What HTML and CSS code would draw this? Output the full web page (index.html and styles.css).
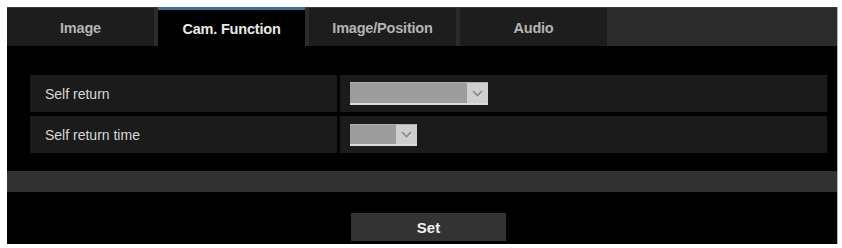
FILE: index.html
```html
<!DOCTYPE html>
<html lang="en">
  <head>
    <meta charset="UTF-8" />
    <meta name="viewport" content="width=device-width, initial-scale=1.0" />
    <title>Cam. Function</title>
    <link rel="stylesheet" href="styles.css">
  </head>
  <body>
    <div class="frame">
      <div class="tabs">
        <div class="tab">Image</div>
        <div class="tab active">Cam. Function</div>
        <div class="tab">Image/Position</div>
        <div class="tab">Audio</div>
      </div>

      <div class="settings">
        <div class="row">
          <div class="label">Self return</div>
          <div class="value">
            <div class="select select-wide">
              <div class="select-box"></div>
              <div class="select-btn">
                <svg width="11" height="7" viewBox="0 0 11 7">
                  <path d="M1 1 L5.5 5.5 L10 1" fill="none" stroke="#8a8a8a" stroke-width="1.6" />
                </svg>
              </div>
            </div>
          </div>
        </div>
        <div class="row">
          <div class="label">Self return time</div>
          <div class="value">
            <div class="select select-short">
              <div class="select-box"></div>
              <div class="select-btn">
                <svg width="11" height="7" viewBox="0 0 11 7">
                  <path d="M1 1 L5.5 5.5 L10 1" fill="none" stroke="#8a8a8a" stroke-width="1.6" />
                </svg>
              </div>
            </div>
          </div>
        </div>
      </div>

      <div class="divider"></div>

      <div class="actions">
        <div class="btn-set">Set</div>
      </div>
    </div>
  </body>
</html>
```

FILE: styles.css
```css
* {
  margin: 0;
  padding: 0;
  box-sizing: border-box;
}

body {
  background: #ffffff;
  font-family: 'Liberation Sans', Arial, sans-serif;
  padding: 7px 0 0 7px;
}

.frame {
  width: 831px;
  height: 237px;
  background: #000;
  border-right: 1px solid #b5b5b5;
  display: flex;
  flex-direction: column;
}

/* tab strip */
.tabs {
  display: flex;
  gap: 4px;
  height: 39px;
  background: #2c2c2c;
  border-top: 1px solid #3a3a3a;
}

.tab {
  width: 147px;
  display: flex;
  align-items: center;
  justify-content: center;
  padding-top: 1px;
  background: #1d1d1d;
  color: #b4b4b4;
  font-size: 14.5px;
  font-weight: bold;
  letter-spacing: -0.2px;
}

.tab.active {
  background: #000;
  color: #e8e8e8;
  border-top: 3px solid #3f6f96;
  margin-top: -1px;
}

/* settings table */
.settings {
  margin: 29px 10px 0 23px;
  display: flex;
  flex-direction: column;
  gap: 4px;
}

.row {
  display: flex;
  gap: 3px;
  height: 37px;
}

.label {
  width: 307px;
  background: #1b1b1b;
  color: #d8d8d8;
  font-size: 14px;
  padding-left: 15px;
  display: flex;
  align-items: center;
}

.value {
  flex: 1;
  background: #1b1b1b;
  padding-left: 10px;
  display: flex;
  align-items: center;
}

.select {
  display: flex;
  border-bottom: 2px solid #dcdcdc;
  border-right: 1px solid #d0d0d0;
  border-top: 1px solid #b0b0b0;
}

.select-wide {
  width: 138px;
  height: 23px;
}

.select-short {
  width: 67px;
  height: 22px;
}

.select-box {
  flex: 1;
  background: #9d9d9d;
}

.select-btn {
  width: 20px;
  background: #cfcfcf;
  display: flex;
  align-items: center;
  justify-content: center;
}

.divider {
  margin-top: 18px;
  height: 21px;
  background: #323232;
}

.actions {
  padding: 21px 0 0 344px;
}

.btn-set {
  width: 155px;
  height: 28px;
  background: #333333;
  color: #f0f0f0;
  font-size: 15px;
  font-weight: bold;
  display: flex;
  align-items: center;
  justify-content: center;
}
```
